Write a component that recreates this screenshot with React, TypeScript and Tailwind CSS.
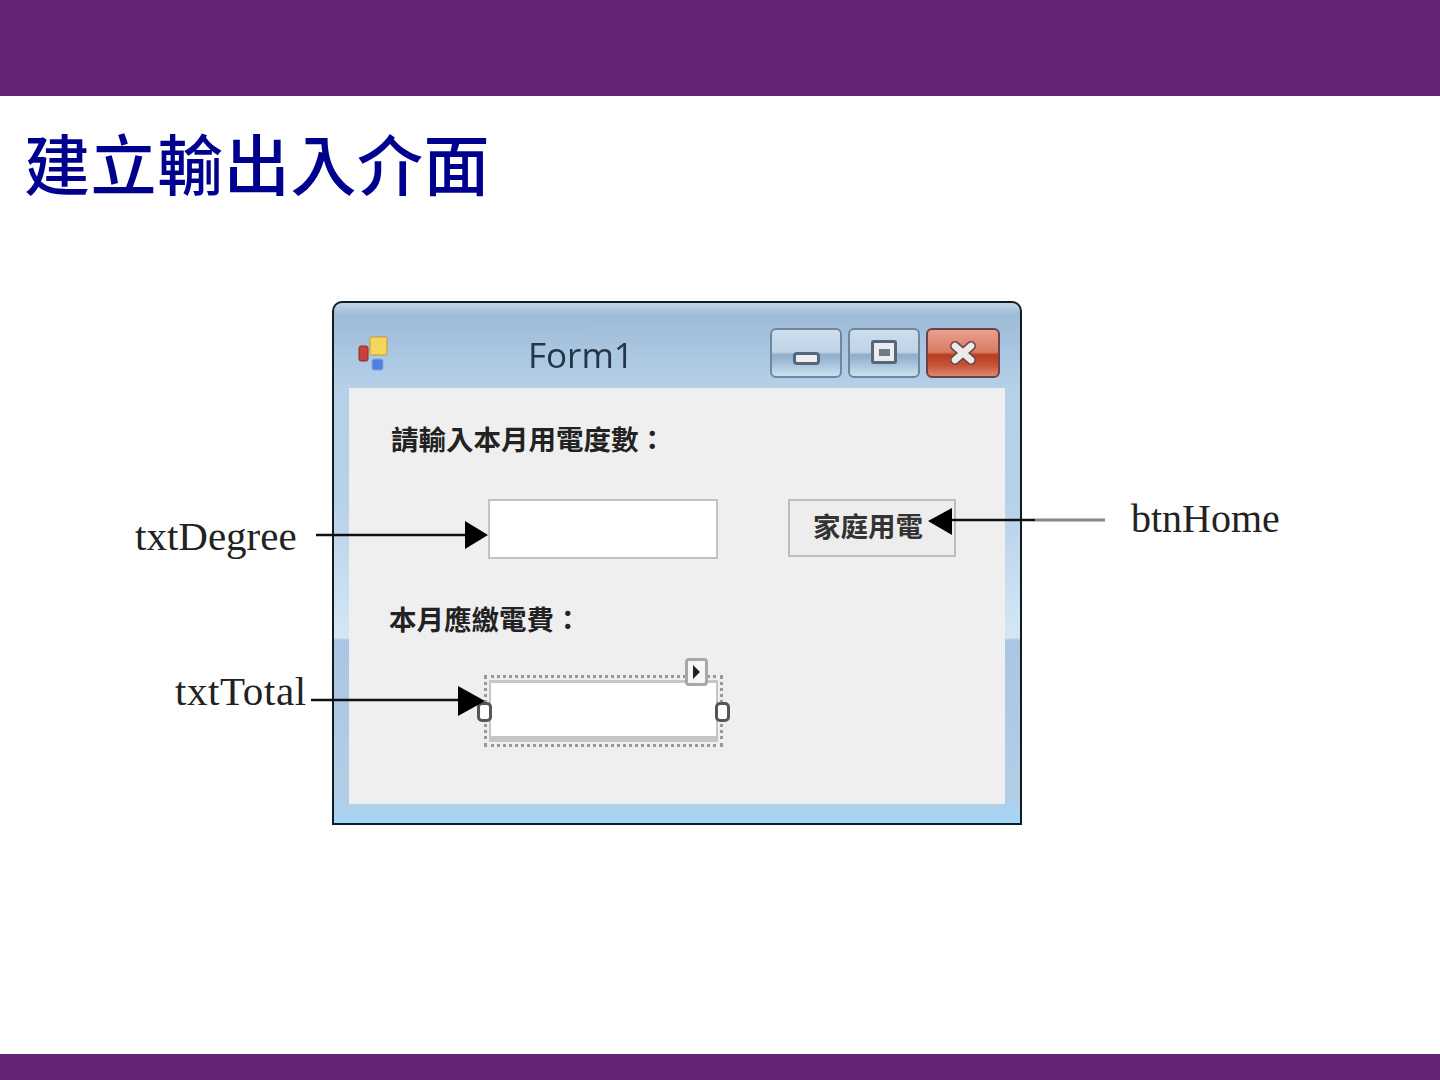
export default function App() {
  const cjk = "font-['Noto_Sans_CJK_TC','Noto_Sans_CJK_JP',sans-serif]";
  const serif = "font-['Liberation_Serif',serif] text-[#222] leading-none whitespace-nowrap";
  return (
    <div className="relative flex h-[1080px] w-[1440px] flex-col overflow-hidden bg-white">
      <header className="h-24 shrink-0 bg-[#662477]" />
      <h1 className={`ml-6 mt-8 text-[66px] font-medium leading-[66px] tracking-[0.6px] text-[#00008f] ${cjk}`}>建立輸出入介面</h1>

      <div className="ml-[332px] mt-[107px] flex h-[524px] w-[690px] flex-col rounded-t-[10px] border-2 border-[#111c22] bg-[linear-gradient(180deg,#c2d5e6_0px,#9dbbd8_12px,#b6d0e9_85px,#b8d1ea_200px,#d3e7f5_335px,#a9c6e4_337px,#b3cde6_490px,#a5d6f6_520px)] blur-[0.6px]">
        <div className="flex h-[85px] shrink-0 items-start pl-6 pr-5">
          <svg className="mt-[33px] shrink-0 blur-[0.6px]" width="30" height="36" viewBox="0 0 30 36">
            <rect x="1" y="10" width="9" height="15" rx="2" fill="#c8403f" stroke="#8c2a2c" />
            <rect x="12" y="1" width="17" height="18" rx="1.5" fill="#f6d65a" stroke="#c39a2c" />
            <rect x="14" y="23" width="11" height="11" rx="2" fill="#4f7fe0" stroke="#86a7dc" />
          </svg>
          <span className="ml-[140px] mt-[27px] font-['Open_Sans',sans-serif] text-[35px] font-medium leading-[50px] text-[#243648]">Form1</span>
          <div className="ml-auto mt-[25px] flex gap-1.5">
            <div className="flex h-[50px] w-[72px] justify-center rounded-md border-2 border-[#71859c] bg-[linear-gradient(180deg,#cddeed_0%,#bfd3e6_48%,#8eacc9_54%,#a9c4dc_75%,#cbe0f1_100%)] pt-[22px]">
              <div className="h-[13px] w-[27px] rounded-[4px] border-[3px] border-[#55677c] bg-[#f0eef0]" />
            </div>
            <div className="flex h-[50px] w-[72px] justify-center rounded-md border-2 border-[#71859c] bg-[linear-gradient(180deg,#cddeed_0%,#bfd3e6_48%,#8eacc9_54%,#a9c4dc_75%,#cbe0f1_100%)] pt-2.5">
              <div className="flex h-[24px] w-[26px] items-center justify-center rounded-[3px] border-[3px] border-[#55677c] bg-[#ececec]">
                <div className="h-[7px] w-[11px] bg-[#6d7a88]" />
              </div>
            </div>
            <div className="flex h-[50px] w-[74px] justify-center rounded-md border-2 border-[#6d4148] bg-[linear-gradient(180deg,#e9a08e_0%,#da7a62_48%,#b63d1f_54%,#c9553a_78%,#da8a70_100%)] pt-2.5">
              <svg width="28" height="26" viewBox="0 0 28 26" fill="none" strokeLinecap="round">
                <path d="M6 6l16 14M22 6L6 20" stroke="#6b4a4c" strokeWidth="10" />
                <path d="M6 6l16 14M22 6L6 20" stroke="#eeeae8" strokeWidth="6.5" />
              </svg>
            </div>
          </div>
        </div>

        <div className={`mx-[15px] h-[416px] bg-[#efefef] pt-9 text-[27.5px] font-bold leading-7 text-[#222] ${cjk}`}>
          <div className="pl-[42px]">請輸入本月用電度數：</div>
          <div className="ml-[139px] mt-[47px] flex items-start gap-[70px]">
            <div className="h-[60px] w-[230px] border-2 border-[#c2c2c2] bg-white" />
            <div className="flex h-[58px] w-[168px] items-center border-2 border-[#bdbdbd] bg-[#ededed] pb-1.5 pl-[23px] text-[#333]">家庭用電</div>
          </div>
          <div className="mt-[45px] pl-10">本月應繳電費：</div>
          <div className="relative ml-[135px] mt-[43px] h-[72px] w-[239px] border-[3px] border-dotted border-[#999] p-[2px]">
            <div className="h-[62px] border-b-[6px] border-l-2 border-r-2 border-t-[3px] border-[#c6c6c6] bg-white" />
            <div className="absolute left-[-10px] top-6 h-5 w-[15px] rounded-[5px] border-[3px] border-[#555] bg-white" />
            <div className="absolute right-[-10px] top-6 h-5 w-[15px] rounded-[5px] border-[3px] border-[#555] bg-white" />
            <div className="absolute left-[198px] top-[-20px] flex h-[28px] w-[23px] items-center justify-center rounded-[4px] border-[3px] border-[#a8a8a8] bg-[#f6f6f6]">
              <svg width="9" height="14" viewBox="0 0 9 14"><path d="M1 0l7 7-7 7z" fill="#222" /></svg>
            </div>
          </div>
        </div>
      </div>

      <footer className="mt-auto h-[26px] shrink-0 bg-[#662477]" />

      <span className={`absolute left-[135px] top-[516px] text-[41px] ${serif}`}>txtDegree</span>
      <span className={`absolute left-[175px] top-[671px] text-[41px] tracking-[0.6px] ${serif}`}>txtTotal</span>
      <span className={`absolute left-[1131px] top-[499px] text-[40px] ${serif}`}>btnHome</span>

      <svg className="pointer-events-none absolute left-0 top-0 blur-[0.4px]" width="1440" height="1080" viewBox="0 0 1440 1080">
        <path d="M316 535H470" stroke="#111" strokeWidth="2.5" />
        <path d="M465 521L488 535L465 549Z" fill="#000" />
        <path d="M311 700H462" stroke="#111" strokeWidth="2.5" />
        <path d="M458 686L485 701L458 716Z" fill="#000" />
        <path d="M945 520H1035" stroke="#111" strokeWidth="2.5" />
        <path d="M1035 520H1105" stroke="#888" strokeWidth="3" />
        <path d="M928 521L952 508V535Z" fill="#000" />
      </svg>
    </div>
  );
}
